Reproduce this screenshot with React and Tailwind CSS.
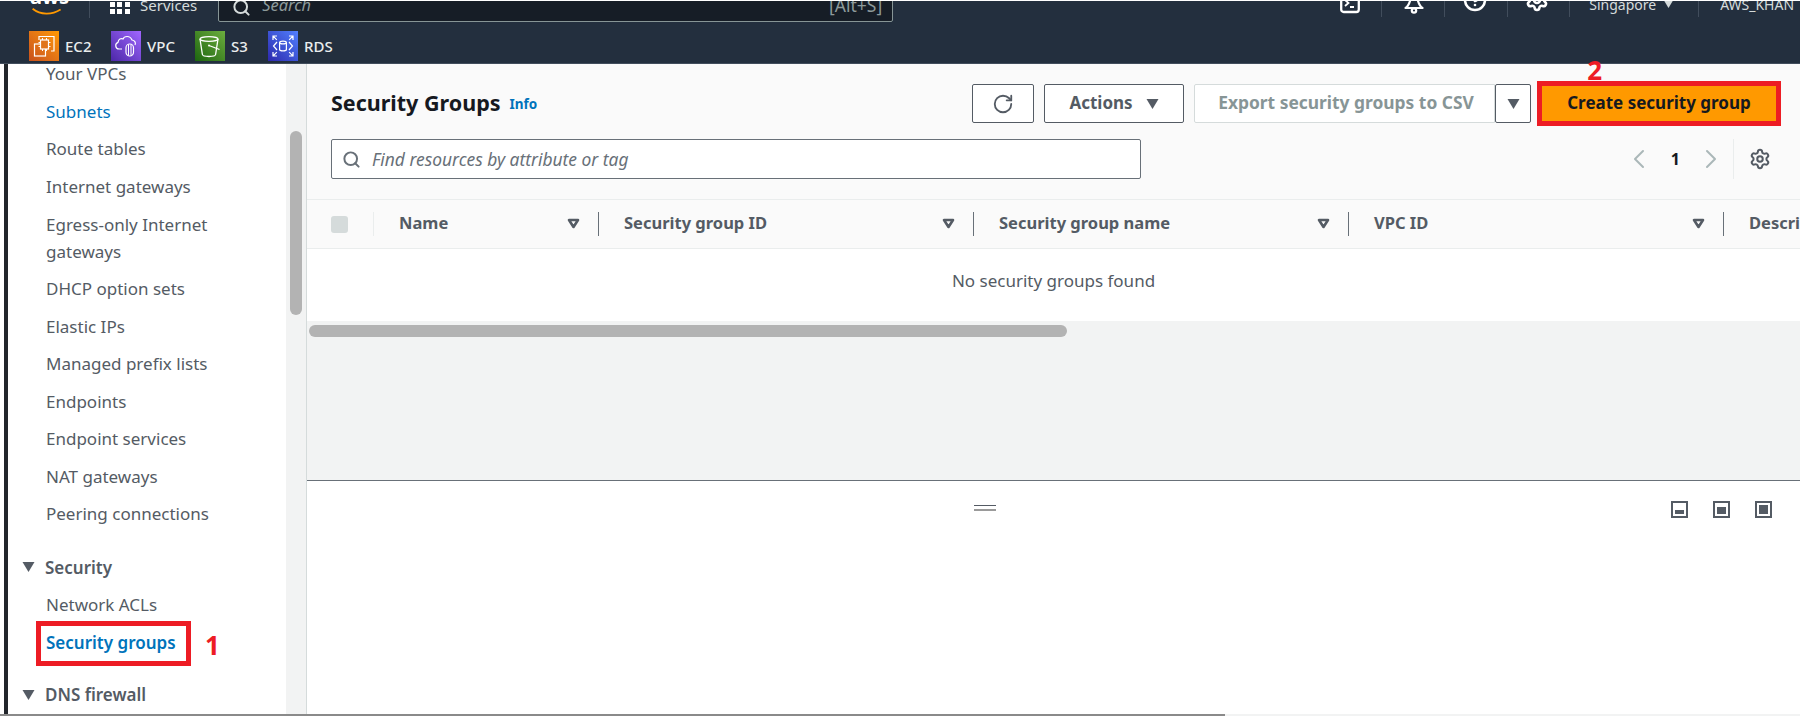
import { RotateCw, Search, ChevronLeft, ChevronRight, Settings, CircleHelp } from 'lucide-react'

const font = 'font-["Noto_Sans","Open_Sans",sans-serif]'

function Caret({ className }) {
    return (
        <svg viewBox="0 0 12 10" className={className}>
            <path d="M0 0h12L6 10z" fill="currentColor" />
        </svg>
    )
}

function SortCaret() {
    return (
        <svg viewBox="0 0 13 11" className="h-[11px] w-[13px] shrink-0 text-[#545b64]">
            <path d="M2 2h9L6.5 9z" fill="none" stroke="currentColor" strokeWidth="2.6" strokeLinejoin="round" />
        </svg>
    )
}

function TerminalIcon() {
    return (
        <svg viewBox="0 0 20 20" className="-mt-[7px] h-[20px] w-[20px]" fill="none" stroke="white" strokeWidth="2.3">
            <rect x="1.2" y="1" width="17.6" height="17" rx="2.5" />
            <path d="M5 6l3.5 3L5 12M10 13h4" strokeWidth="1.8" />
        </svg>
    )
}

function BellIcon() {
    return (
        <svg viewBox="0 0 20 20" className="-mt-[7px] ml-[22px] h-[20px] w-[20px]" fill="none" stroke="white" strokeWidth="2.2">
            <path d="M1.5 14C5 12 6 8 7 3h6c1 5 2 9 5.5 11z" strokeLinejoin="round" />
            <circle cx="10" cy="16.5" r="2.2" />
        </svg>
    )
}

function Ec2Icon() {
    return (
        <svg viewBox="0 0 30 30" className="h-full w-full" fill="none" stroke="white" strokeWidth="1.2">
            <path d="M10 9V5.5h15V20h-3" />
            <rect x="5.5" y="13" width="11" height="12" />
            <rect x="11.5" y="9" width="8" height="9" fill="#e0741a" />
            <path d="M13.5 7v2M17.5 7v2M13.5 18v2M17.5 18v2M9.5 11.5h2M9.5 15.5h2M19.5 11.5h2M19.5 15.5h2" strokeWidth="1" />
        </svg>
    )
}

function VpcIcon() {
    return (
        <svg viewBox="0 0 30 30" className="h-full w-full" fill="none" stroke="white" strokeWidth="1.2">
            <path d="M11 18H8a3.4 3.4 0 0 1-1-6.6C7.5 8 10 7 12 8c1-3 7-4 9 1 3 .3 4 3 3 5" />
            <rect x="15" y="13" width="7.5" height="12" rx="3.7" />
            <path d="M17.5 13.5v11M20 13.5v11" strokeWidth="1" />
        </svg>
    )
}

function S3Icon() {
    return (
        <svg viewBox="0 0 30 30" className="h-full w-full" fill="none" stroke="white" strokeWidth="1.3">
            <ellipse cx="14" cy="8" rx="9" ry="2.4" />
            <path d="M5 8l2.4 15.5c.3 1.6 3.5 2 6.6 2s6.3-.4 6.6-2L23 8" />
            <circle cx="14" cy="14.5" r="1" fill="white" stroke="none" />
            <path d="M14 14.5l10.5 4" />
        </svg>
    )
}

function RdsIcon() {
    return (
        <svg viewBox="0 0 30 30" className="h-full w-full" fill="none" stroke="white" strokeWidth="1.2">
            <ellipse cx="15" cy="11.5" rx="3.4" ry="1.4" />
            <path d="M11.6 11.5v7c0 .8 1.5 1.4 3.4 1.4s3.4-.6 3.4-1.4v-7" />
            <path d="M9 11l-3.5 4L9 19M21 11l3.5 4L21 19" />
            <path d="M5 9V5h4M5.2 5.2l3.6 3.6M25 9V5h-4M24.8 5.2l-3.6 3.6M5 21v4h4M5.2 24.8l3.6-3.6M25 21v4h-4M24.8 24.8l-3.6-3.6" />
        </svg>
    )
}

const shortcuts = [
    { label: 'EC2', icon: <Ec2Icon />, bg: 'from-[#c8511b] to-[#ff9900]', width: 'w-[82px]' },
    { label: 'VPC', icon: <VpcIcon />, bg: 'from-[#4d27a8] to-[#a166ff]', width: 'w-[84px]' },
    { label: 'S3', icon: <S3Icon />, bg: 'from-[#1b660f] to-[#6cae3e]', width: 'w-[73px]' },
    { label: 'RDS', icon: <RdsIcon />, bg: 'from-[#2e27ad] to-[#527fff]', width: 'w-[70px]' },
]

function TopNav() {
    return (
        <header className="bg-[#232f3e] text-white">
            <div className="h-px bg-white" />
            <div className="flex h-[21px] overflow-hidden">
                <div className="-mt-[8px] flex h-[29px] w-full items-start">
                    <div className="relative ml-[28px] h-[24px] w-[37px]">
                        <span className="absolute -top-[6px] left-[2px] text-[20px] leading-[20px] font-bold">aws</span>
                        <svg viewBox="0 0 38 10" className="absolute top-[15px] left-0 h-[8px] w-[38px]" fill="none" stroke="#ff9900" strokeWidth="2.2">
                            <path d="M1 1c10 8 24 8 35 1" />
                        </svg>
                    </div>
                    <div className="mt-[5px] ml-[24px] h-[20px] w-px bg-[#414d5c]" />
                    <div className="mt-[2px] ml-[20px] grid w-[20px] grid-cols-3 gap-[2px]">
                        {Array.from({ length: 9 }).map((_, i) => (
                            <span key={i} className="h-[5px] w-[5px] bg-white" />
                        ))}
                    </div>
                    <span className="ml-[10px] text-[15px] leading-[24px] text-[#d5dbdb]">Services</span>
                    <div className="ml-[21px] flex h-[29px] w-[675px] items-center rounded-br-[2px] rounded-bl-[2px] border border-[#879596] bg-[#161d26] pr-[10px] pl-[13px]">
                        <Search className="h-[19px] w-[19px] text-[#d5dbdb]" strokeWidth={2.5} />
                        <span className="-mt-[5px] ml-[11px] text-[16.4px] text-[#8d9a9b] italic">Search</span>
                        <span className="-mt-[5px] ml-auto text-[17.5px] text-[#8d9a9b]">[Alt+S]</span>
                    </div>
                    <div className="ml-[447px] flex h-full items-start pt-[8px]">
                        <TerminalIcon />
                        <div className="ml-[21px] h-[16px] w-px bg-[#414d5c]" />
                        <BellIcon />
                        <div className="ml-[20px] h-[16px] w-px bg-[#414d5c]" />
                        <CircleHelp className="-mt-[13px] ml-[18px] h-[24px] w-[24px]" strokeWidth={2.6} />
                        <div className="ml-[20px] h-[16px] w-px bg-[#414d5c]" />
                        <Settings className="-mt-[13px] ml-[17px] h-[24px] w-[24px]" strokeWidth={2.6} />
                        <div className="ml-[20px] h-[16px] w-px bg-[#414d5c]" />
                        <span className="-mt-[6px] ml-[19px] text-[14px] leading-[20px] text-[#d5dbdb]">Singapore</span>
                        <Caret className="mt-[0px] ml-[8px] h-[7px] w-[9px] text-[#d5dbdb]" />
                        <div className="ml-[25px] h-[16px] w-px bg-[#414d5c]" />
                        <span className="-mt-[6px] ml-[21px] text-[14px] leading-[20px] whitespace-nowrap text-[#d5dbdb]">AWS_KHAN</span>
                    </div>
                </div>
            </div>
            <div className="flex h-[41px] items-start pt-[9px] pl-[29px]">
                {shortcuts.map((s) => (
                    <div key={s.label} className={`flex items-center ${s.width}`}>
                        <div className={`h-[30px] w-[30px] shrink-0 bg-linear-to-tr ${s.bg}`}>{s.icon}</div>
                        <span className="ml-[6px] text-[15px] leading-[30px] font-medium text-[#eaeded]">{s.label}</span>
                    </div>
                ))}
            </div>
            <div className="h-px bg-[#414d5c]" />
        </header>
    )
}

const navTop = [
    ['Your VPCs'],
    ['Subnets', 'text-[#0073bb]'],
    ['Route tables'],
    ['Internet gateways'],
]
const navMid = [
    'DHCP option sets',
    'Elastic IPs',
    'Managed prefix lists',
    'Endpoints',
    'Endpoint services',
    'NAT gateways',
    'Peering connections',
]

function NavItem({ children, className = 'text-[#545b64]' }) {
    return <div className={`flex h-[37.5px] items-center pl-[38px] text-[17px] ${className}`}>{children}</div>
}

function NavGroup({ children }) {
    return (
        <div className="flex h-[37.5px] items-center pl-[14px] text-[17px] font-semibold text-[#545b64]">
            <Caret className="mr-[10px] h-[10px] w-[13px]" />
            {children}
        </div>
    )
}

function Sidebar() {
    return (
        <aside className="relative flex w-[307px] shrink-0 border-r border-[#d5dbdb]">
            <div className="w-[8px] shrink-0">
                <div className="ml-[4px] h-full w-[4px] bg-[#22262b]" />
            </div>
            <div className="w-[278px] overflow-hidden bg-white">
                <div className="-mt-[9px]">
                    {navTop.map(([label, cls]) => (
                        <NavItem key={label} className={cls || 'text-[#545b64]'}>{label}</NavItem>
                    ))}
                    <div className="flex h-[65px] items-center pl-[38px] text-[17px] leading-[27px] text-[#545b64]">
                        Egress-only Internet<br />gateways
                    </div>
                    {navMid.map((label) => (
                        <NavItem key={label}>{label}</NavItem>
                    ))}
                    <div className="h-[16px]" />
                    <NavGroup>Security</NavGroup>
                    <NavItem>Network ACLs</NavItem>
                    <NavItem className="font-semibold text-[#0073bb]">Security groups</NavItem>
                    <div className="h-[15px]" />
                    <NavGroup>DNS firewall</NavGroup>
                </div>
            </div>
            <div className="w-[20px] bg-[#f2f3f3]" />

            {/* scrollbar thumb */}
            <div className="absolute top-[67px] left-[290px] h-[184px] w-[12px] rounded-full bg-[#b3b3b3]" />

            {/* step annotation */}
            <div className="absolute top-[557px] left-[36px] h-[45px] w-[155px] border-[5px] border-[#ed1c24]" />
            <span className="absolute top-[566px] left-[205px] text-[26px] leading-[30px] font-bold text-[#ed1c24]">1</span>
        </aside>
    )
}

const columns = [
    { label: 'Name', width: 'w-[225px]' },
    { label: 'Security group ID', width: 'w-[375px]' },
    { label: 'Security group name', width: 'w-[375px]' },
    { label: 'VPC ID', width: 'w-[375px]' },
]

function Btn({ children, className = '' }) {
    return (
        <div className={`flex h-[39px] items-center justify-center rounded-[2px] border border-[#545b64] bg-white text-[17px] font-bold text-[#545b64] ${className}`}>
            {children}
        </div>
    )
}

function Table() {
    return (
        <div className="border-b border-[#687078] bg-[#f2f3f3]">
            <div className="h-[136px] border-b border-[#eaeded] bg-[#fafafa] pt-[20px] pr-[19px] pl-[24px]">
                <div className="flex h-[39px] items-center">
                    <h1 className="text-[21.5px] font-bold text-[#16191f]">Security Groups</h1>
                    <span className="mt-[2px] ml-[9px] text-[13.5px] font-bold text-[#0073bb]">Info</span>
                    <div className="relative ml-auto flex items-center">
                        <Btn className="w-[62px]"><RotateCw className="h-[22px] w-[22px]" strokeWidth={2} /></Btn>
                        <Btn className="ml-[10px] w-[140px] pb-[2px]">
                            Actions
                            <Caret className="mt-[2px] ml-[13px] h-[10px] w-[13px]" />
                        </Btn>
                        <div className="ml-[10px] flex h-[39px] w-[301px] items-center justify-center rounded-l-[2px] border border-[#d5dbdb] bg-white pb-[2px] pl-[3px] text-[17.4px] font-bold text-[#879596]">
                            Export security groups to CSV
                        </div>
                        <Btn className="w-[36px]"><Caret className="h-[10px] w-[13px]" /></Btn>
                        <div className="-my-[3px] ml-[6px] box-border flex h-[45px] w-[244px] items-center justify-center border-[5px] border-[#ed1c24] bg-[#ff9900] pb-[2px] text-[17px] font-bold text-[#16191f]">
                            Create security group
                        </div>
                        <span className="absolute -top-[27px] right-[179px] text-[26px] leading-[26px] font-bold text-[#ed1c24]">2</span>
                    </div>
                </div>
                <div className="mt-[16px] flex h-[40px] items-center">
                    <div className="flex h-[40px] w-[810px] items-center rounded-[2px] border border-[#687078] bg-white pl-[10px]">
                        <Search className="h-[19px] w-[19px] text-[#687078]" strokeWidth={2.5} />
                        <span className="ml-[11px] text-[17.4px] text-[#687078] italic">Find resources by attribute or tag</span>
                    </div>
                    <div className="ml-auto flex items-center text-[#545b64]">
                        <ChevronLeft className="h-[32px] w-[32px] text-[#aab7b8]" strokeWidth={1.5} />
                        <span className="mr-[15px] ml-[16px] text-[16px] font-bold text-[#16191f]">1</span>
                        <ChevronRight className="h-[32px] w-[32px] text-[#aab7b8]" strokeWidth={1.5} />
                        <div className="mr-[15px] ml-[6px] h-[40px] w-px bg-[#eaeded]" />
                        <Settings className="mr-[10px] h-[22px] w-[22px]" strokeWidth={2.2} />
                    </div>
                </div>
            </div>
            <div className="flex h-[49px] items-center overflow-hidden border-b border-[#eaeded] bg-[#fafafa]">
                <div className="flex h-[24px] w-[67px] shrink-0 items-center border-r border-[#eaeded] pl-[24px]">
                    <div className="h-[17px] w-[17px] rounded-[3px] bg-[#d5dbdb]" />
                </div>
                {columns.map((c) => (
                    <div key={c.label} className={`flex h-[24px] shrink-0 items-center border-r border-[#687078] pr-[18px] pb-[1px] pl-[25px] text-[16.5px] font-bold text-[#545b64] ${c.width}`}>
                        {c.label}
                        <span className="ml-auto"><SortCaret /></span>
                    </div>
                ))}
                <div className="pb-[1px] pl-[25px] text-[16.5px] font-bold whitespace-nowrap text-[#545b64]">Description</div>
            </div>
            <div className="flex h-[72px] items-start justify-center bg-white pt-[19px] text-[17px] text-[#545b64]">
                No security groups found
            </div>
            <div className="h-[159px] pt-[4px] pl-[2px]">
                <div className="h-[12px] w-[758px] rounded-full bg-[#b3b3b3]" />
            </div>
        </div>
    )
}

function PanelIcon({ fill }) {
    return (
        <div className="flex h-[17px] w-[17px] flex-col justify-end border-[2px] border-[#545b64] p-[2px]">
            <div className={`w-full bg-[#545b64] ${fill}`} />
        </div>
    )
}

function SplitPanel() {
    return (
        <div className="flex h-[52px] items-start pt-[20px]">
            <div className="ml-[667px] w-[22px] pt-[4px]">
                <div className="h-px bg-[#545b64]" />
                <div className="mt-[3px] h-[2px] bg-[#9a9a9a]" />
            </div>
            <div className="mr-[28px] ml-auto flex gap-[25px]">
                <PanelIcon fill="h-[4px]" />
                <PanelIcon fill="h-[7px]" />
                <PanelIcon fill="h-full" />
            </div>
        </div>
    )
}

export default function App() {
    return (
        <div className={`relative flex h-[716px] w-[1800px] flex-col overflow-hidden bg-white ${font}`}>
            <TopNav />
            <div className="flex min-h-0 flex-1">
                <Sidebar />
                <main className="min-w-0 flex-1">
                    <Table />
                    <SplitPanel />
                </main>
            </div>
            <div className="h-[2px] shrink-0 bg-[#f2f3f3]">
                <div className="h-full w-[1225px] bg-[#8a8a8a]" />
            </div>
        </div>
    )
}
